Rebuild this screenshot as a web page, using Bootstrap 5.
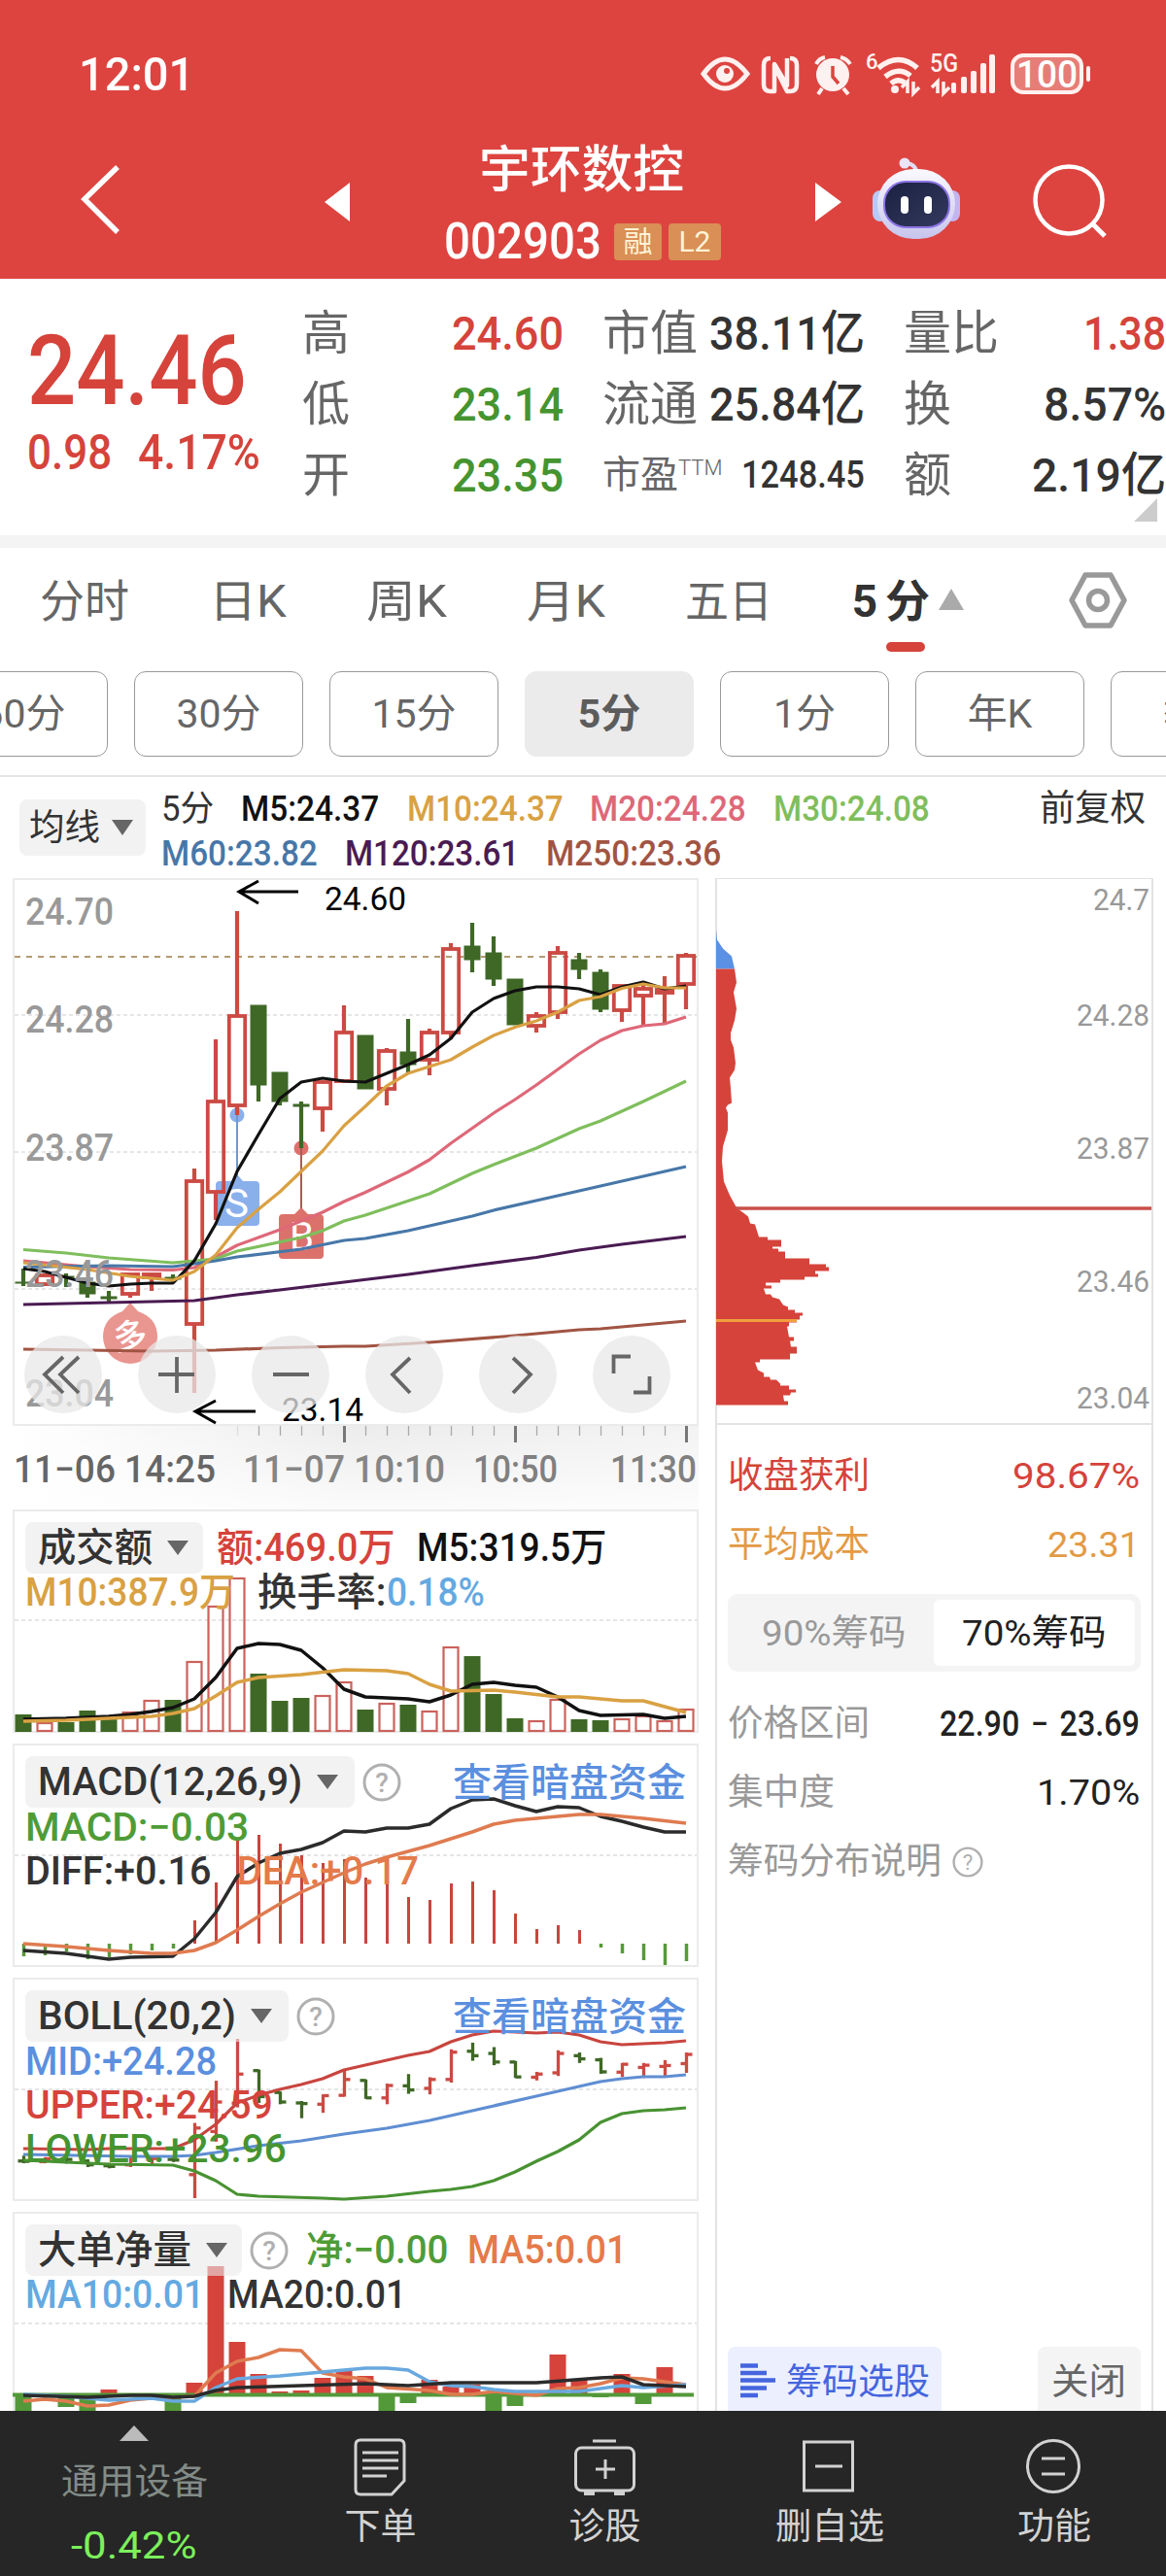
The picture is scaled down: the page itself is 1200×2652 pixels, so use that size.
<!DOCTYPE html>
<html lang="zh-CN">
<head>
<meta charset="utf-8">
<meta name="viewport" content="width=device-width, initial-scale=1">
<title>宇环数控 002903</title>
<link rel="stylesheet" href="https://cdn.jsdelivr.net/npm/bootstrap@5.3.0/dist/css/bootstrap.min.css">
<style>
  :root{--up:#d5433b;--down:#45942f;--ink:#333;--dim:#666;--line:#ebebeb;}
  body{width:1200px;height:2652px;overflow:hidden;background:#fff;color:var(--ink);font-family:Roboto,"Noto Sans CJK SC",sans-serif;font-size:37px;}
  svg{display:block;overflow:visible}
  svg text{font-family:Roboto,"Noto Sans CJK SC",sans-serif}
  [data-w]{display:inline-block;white-space:nowrap;transform-origin:0 50%}
  .up{color:var(--up)} .down{color:var(--down)} .dim{color:var(--dim)}
  .m{font-weight:500}
  /* header */
  .topbar{height:287px;background:#dd4440;color:#fff}
  .statusbar{height:130px;padding:24px 0 0 81px}
  .clock{font-size:49px;line-height:106px}
  .titlebar{height:156px}
  .stock-title{width:300px;margin-left:90px}
  .stock-name{font-size:52px;line-height:58px;font-weight:500;margin-top:17px}
  .stock-code{font-size:51px;line-height:42px;height:42px;margin-top:23px;font-weight:500}
  .tag{height:38px;line-height:38px;background:#d98f55;border-radius:4px;font-size:30px;color:#fff3d6;text-align:center;font-weight:400}
  /* quote */
  .quote{height:264px}
  .price{font-size:101px;line-height:100px}
  .chg{font-size:50px;line-height:68px}
  .q-row{height:73px;line-height:73px;font-size:49px}
  .q-small{font-size:39px}
  .gap-bar{height:13px;background:#f4f4f4}
  /* tabs */
  .periods{height:127px;line-height:111px;font-size:46px;color:#666;gap:82px;padding-left:41px;padding-right:40px}
  .periods .on{color:#333;font-weight:700}
  .periods .on::after{content:"";position:absolute;left:35px;top:97px;width:40px;height:10px;border-radius:5px;background:var(--up)}
  .subs{height:107px;gap:27px;padding-left:0;overflow:hidden}
  .subs .btn{flex:0 0 174px;height:88px;border:1.5px solid #999;border-radius:12px;padding:0;font-size:41px;line-height:84px;color:#666}
  .subs .btn:first-child{margin-left:-63px}
  .subs .btn.on{background:#ebebeb;border-color:#ebebeb;font-weight:700;color:#5c5c5c}
  .ma-head{height:106px;border-top:2px solid #e5e5e5}
  .chip{background:rgba(233,233,233,.6);border-radius:8px;color:#333}
  .chip-ma{width:130px;height:58px;line-height:57px;margin:23px 0 0 20px;padding-left:10px;gap:12px}
  .ma-row{height:46px;line-height:48px;font-size:36px;gap:28px;font-weight:500}
  /* charts */
  .body-area{height:1578px;overflow:hidden}
  .left-col{width:706px;margin-left:13px}
  .panel{border:2px solid var(--line);height:230px;margin-bottom:11px;font-size:40px}
  .panel > svg{position:absolute;left:-2px;top:-2px}
  .panel .chip{height:53px;line-height:53px;padding-left:13px;gap:15px}
  .p-row{position:relative;padding-left:11px;padding-top:11px}
  .v-row{position:relative;height:45px;line-height:45px;padding-left:11px}
  .right-col{width:451px;margin-left:17px;border:2px solid #e3e3e3;border-top-width:1.5px;border-bottom:0}
  .chips-canvas{height:562px;border-bottom:2px solid #e3e3e3}
  .kv{height:71px;line-height:72px;padding:0 12px 0 11px}
  .seg{height:80px;margin:15px 11px 18px 11px;background:#f4f4f4;border-radius:10px;padding:6px;line-height:69px;color:#999}
  .seg .on{background:#fff;border-radius:6px;color:#222;width:207px}
  .seg div{flex:1 1 0;text-align:center}
  .foot-btn{height:80px;border-radius:8px;line-height:74px}
  /* bottom bar */
  .tabbar{height:170px;background:#262626;color:#d2d2d2}
  .tabbar .cell{width:231px;line-height:48px}
  .tabbar .cell svg{margin:22px auto 10px}
</style>
<script src="https://cdn.jsdelivr.net/npm/bootstrap@5.3.0/dist/js/bootstrap.bundle.min.js"></script>
</head>
<body>

<header class="topbar">
  <div class="statusbar d-flex">
    <div class="clock m"><span data-w="119">12:01</span></div>
    <svg width="410" height="60" viewBox="716 46 410 60" class="ms-auto" style="margin-right:74px;margin-top:22px" fill="none" stroke="#fff1ef">
      <path d="M724 76Q746 46 769 76Q746 106 724 76Z" stroke-width="5"/><circle cx="746" cy="76" r="9" fill="#fff1ef" stroke="none"/><circle cx="748" cy="73" r="3" fill="#dd4440" stroke="none"/>
      <path d="M793 60Q786 60 786 67V87Q786 94 793 94H797V66L810 88V60M813 60Q820 60 820 67V87Q820 94 813 94H810L797 68" stroke-width="4.500" stroke-linejoin="round"/>
      <circle cx="857" cy="77" r="17" fill="#fff1ef" stroke="none"/><path d="M857 68V79L863 86" stroke="#dd4440" stroke-width="3.5"/><path d="M840 66Q843 60 849 59M865 59Q871 60 875 66M846 91L842 97M868 91L873 97" stroke-width="4"/>
      <path d="M904 70Q925 53 944 70M911 79Q925 68 937 78M917 86Q924 80 931 85" stroke-width="5.5"/><circle cx="921" cy="92" r="4" fill="#fff1ef" stroke="none"/>
      <path d="M934 96V84L928 90M940 84V96L946 90" stroke-width="3.5"/>
      <g fill="#fff1ef" stroke="none" font-weight="500"><text x="891" y="71" font-size="22" textLength="12">6</text><text x="957" y="74" font-size="25" textLength="29" lengthAdjust="spacingAndGlyphs">5G</text>
      <rect x="979" y="85" width="5" height="11" rx="2"/><rect x="989" y="79" width="6" height="17" rx="2"/><rect x="999" y="73" width="6" height="23" rx="2"/><rect x="1009" y="65" width="6" height="31" rx="2"/><rect x="1018" y="56" width="6" height="40" rx="2"/></g>
      <path d="M965 96V84L959 90M971 84V96L977 90" stroke-width="3.5"/>
      <rect x="1042" y="57" width="71" height="38" rx="11" stroke-width="4" fill="#e77d77"/><path d="M1120 70V82" stroke-width="4" stroke-linecap="round"/>
      <text x="1046" y="90" font-size="39" font-weight="500" fill="#fff" stroke="none" textLength="63" lengthAdjust="spacingAndGlyphs">100</text>
    </svg>
  </div>
  <div class="titlebar d-flex">
    <svg width="360" height="156" viewBox="0 130 360 156" fill="none"><path d="M121 172L87 205L121 239" stroke="#fff" stroke-width="5.5"/><path d="M334 208L360 188V228Z" fill="#fff"/></svg>
    <div class="stock-title text-center">
      <div class="stock-name"><span data-w="211" style="position:relative;left:-1px">宇环数控</span></div>
      <div class="stock-code d-flex align-items-center"><span data-w="162" style="margin-left:7px">002903</span><span class="tag" style="width:49px;margin-left:13px">融</span><span class="tag" style="width:54px;margin-left:7px">L2</span></div>
    </div>
    <svg width="450" height="156" viewBox="750 130 450 156" fill="none">
      <defs><linearGradient id="shell" x1="0" y1="0" x2="0" y2="1"><stop offset="0" stop-color="#fbf9ff"/><stop offset="1" stop-color="#c6c4ec"/></linearGradient>
      <linearGradient id="visor" x1="0" y1="0" x2="1" y2="1"><stop offset="0" stop-color="#1a2040"/><stop offset="1" stop-color="#343a5e"/></linearGradient></defs>
      <path d="M839 188L866 208L839 228Z" fill="#fff"/>
      <path d="M944 180Q943 169 933 168" stroke="#e4dcf4" stroke-width="4"/><circle cx="931" cy="168" r="5.5" fill="#e9e4f8"/>
      <rect x="898" y="196" width="16" height="32" rx="8" fill="#b9c9f5"/><rect x="972" y="196" width="16" height="32" rx="8" fill="#c3b6f0"/>
      <rect x="903" y="174" width="80" height="72" rx="37" fill="url(#shell)"/>
      <rect x="910" y="187" width="67" height="47" rx="22" fill="url(#visor)" stroke="#8d74e6" stroke-width="2"/>
      <rect x="927" y="202" width="8" height="18" rx="4" fill="#fff"/><rect x="951" y="202" width="8" height="18" rx="4" fill="#fff"/>
      <circle cx="1100" cy="206" r="34.5" stroke="#fff" stroke-width="4.5"/><path d="M1124 230L1137 243" stroke="#fff" stroke-width="5"/>
    </svg>
  </div>
</header>

<section class="quote d-flex position-relative">
  <div style="width:312px;padding:45px 0 0 28px" class="up m">
    <div class="price"><span data-w="226">24.46</span></div>
    <div class="chg d-flex"><span data-w="87">0.98</span><span data-w="126" style="margin-left:27px">4.17%</span></div>
  </div>
  <div style="width:268px;padding-top:20px">
    <div class="q-row d-flex justify-content-between"><span class="dim" style="margin-left:-1px">高</span><span data-w="115" class="up m">24.60</span></div>
    <div class="q-row d-flex justify-content-between"><span class="dim" style="margin-left:-1px">低</span><span data-w="115" class="down m">23.14</span></div>
    <div class="q-row d-flex justify-content-between"><span class="dim" style="margin-left:-1px">开</span><span data-w="115" class="down m">23.35</span></div>
  </div>
  <div style="width:270px;margin-left:40px;padding-top:20px">
    <div class="q-row d-flex justify-content-between"><span class="dim">市值</span><span data-w="160" class="m">38.11亿</span></div>
    <div class="q-row d-flex justify-content-between"><span class="dim">流通</span><span data-w="160" class="m">25.84亿</span></div>
    <div class="q-row q-small d-flex justify-content-between"><span class="dim">市盈<span style="font-size:22px;font-weight:300;position:relative;top:-13px">TTM</span></span><span data-w="127" class="m">1248.45</span></div>
  </div>
  <div style="width:270px;margin-left:40px;padding-top:20px">
    <div class="q-row d-flex justify-content-between"><span class="dim">量比</span><span data-w="85" class="up m">1.38</span></div>
    <div class="q-row d-flex justify-content-between"><span class="dim">换</span><span data-w="126" class="m">8.57%</span></div>
    <div class="q-row d-flex justify-content-between"><span class="dim">额</span><span data-w="138" class="m">2.19亿</span></div>
  </div>
  <svg width="24" height="24" class="position-absolute" style="right:9px;top:226px"><path d="M24 0V24H0Z" fill="#ccc"/></svg>
</section>
<div class="gap-bar"></div>

<nav class="periods d-flex">
  <span data-w="92">分时</span><span data-w="80">日K</span><span data-w="83">周K</span><span data-w="81">月K</span><span data-w="90">五日</span>
  <span class="on position-relative d-flex"><span>5</span><span style="margin-left:8px">分</span><svg width="28" height="24" style="margin:41px 0 0 8px"><path d="M14 1L27 23H1Z" fill="#aaa"/></svg></span>
  <svg width="60" height="58" viewBox="0 0 60 58" class="ms-auto" style="margin-top:25px" fill="none" stroke="#999" stroke-width="5.5" stroke-linejoin="round"><path d="M17 3H43L57 29L43 55H17L3 29Z"/><circle cx="30" cy="29" r="9.5"/></svg>
</nav>
<div class="subs d-flex">
  <button class="btn">60分</button><button class="btn">30分</button><button class="btn">15分</button><button class="btn on">5分</button><button class="btn">1分</button><button class="btn">年K</button><button class="btn">季K</button>
</div>

<section class="ma-head d-flex">
  <div class="chip chip-ma d-flex align-items-center"><span data-w="73">均线</span><svg width="22" height="16"><path d="M0 0H22L11 16Z" fill="#666"/></svg></div>
  <div style="margin-left:16px;padding-top:9px">
    <div class="ma-row d-flex"><span data-w="54" class="fw-normal">5分</span><span data-w="142" style="color:#111">M5:24.37</span><span data-w="161" style="color:#d9a143">M10:24.37</span><span data-w="161" style="color:#de6878">M20:24.28</span><span data-w="161" style="color:#7fbe5c">M30:24.08</span></div>
    <div class="ma-row d-flex"><span data-w="161" style="color:#4777a8">M60:23.82</span><span data-w="179" style="color:#4a1b52">M120:23.61</span><span data-w="180" style="color:#a15443">M250:23.36</span></div>
  </div>
  <span class="ms-auto" data-w="109" style="line-height:66px;position:relative;left:-21px">前复权</span>
</section>

<main class="body-area d-flex">
  <div class="left-col">
    <div class="panel position-relative" style="height:564px;margin-bottom:0">
      <svg id="kline" width="706" height="564" viewBox="13 904 706 564" fill="none"></svg>
    </div>
    <div style="height:86px">
      <svg id="axis" width="706" height="86" viewBox="13 1468 706 86"></svg>
    </div>
    <div class="panel position-relative">
      <svg id="vol" width="706" height="230" viewBox="13 1554 706 230" fill="none"></svg>
      <div class="p-row d-flex m">
        <div class="chip d-flex align-items-center" style="width:183px"><span data-w="118">成交额</span><svg width="22" height="15"><path d="M0 0H22L11 15Z" fill="#666"/></svg></div>
        <span data-w="184" class="up" style="line-height:54px;margin-left:14px">额:469.0万</span><span data-w="195" style="line-height:54px;margin-left:22px;color:#111">M5:319.5万</span>
      </div>
      <div class="v-row d-flex m" style="margin-top:-4px"><span data-w="216" style="color:#d9a143">M10:387.9万</span><span data-w="133" style="margin-left:23px">换手率:</span><span data-w="101" style="color:#64a9e2">0.18%</span></div>
    </div>
    <div class="panel position-relative">
      <svg id="macd" width="706" height="230" viewBox="13 1795 706 230" fill="none"></svg>
      <div class="p-row d-flex m">
        <div class="chip d-flex align-items-center" style="width:339px"><span data-w="272">MACD(12,26,9)</span><svg width="22" height="15"><path d="M0 0H22L11 15Z" fill="#666"/></svg></div>
        <svg class="help" width="40" height="40" style="margin:7px 0 0 8px"></svg>
        <span data-w="240" class="ms-auto" style="line-height:55px;color:#5b8fdf;position:relative;left:-11px">查看暗盘资金</span>
      </div>
      <div class="v-row d-flex m" style="margin-top:-4px"><span data-w="230" style="color:#4f9c37">MACD:−0.03</span></div>
      <div class="v-row d-flex m"><span data-w="192">DIFF:+0.16</span><span data-w="187" style="color:#e57a4a;margin-left:26px">DEA:+0.17</span></div>
    </div>
    <div class="panel position-relative">
      <svg id="boll" width="706" height="230" viewBox="13 2036 706 230" fill="none"></svg>
      <div class="p-row d-flex m">
        <div class="chip d-flex align-items-center" style="width:271px"><span data-w="204">BOLL(20,2)</span><svg width="22" height="15"><path d="M0 0H22L11 15Z" fill="#666"/></svg></div>
        <svg class="help" width="40" height="40" style="margin:7px 0 0 8px"></svg>
        <span data-w="240" class="ms-auto" style="line-height:55px;color:#5b8fdf;position:relative;left:-11px">查看暗盘资金</span>
      </div>
      <div class="v-row d-flex m" style="margin-top:-4px;color:#5b8fdf"><span data-w="197">MID:+24.28</span></div>
      <div class="v-row d-flex m up"><span data-w="255">UPPER:+24.59</span></div>
      <div class="v-row d-flex m down"><span data-w="269">LOWER:+23.96</span></div>
    </div>
    <div class="panel position-relative">
      <svg id="big" width="706" height="230" viewBox="13 2277 706 230" fill="none"></svg>
      <div class="p-row d-flex m">
        <div class="chip d-flex align-items-center" style="width:223px"><span data-w="158">大单净量</span><svg width="22" height="15"><path d="M0 0H22L11 15Z" fill="#666"/></svg></div>
        <svg class="help" width="40" height="40" style="margin:7px 0 0 8px"></svg>
        <span data-w="146" style="line-height:54px;color:#4f9c37;margin-left:18px">净:−0.00</span><span data-w="164" style="line-height:54px;margin-left:20px;color:#e57a4a">MA5:0.01</span>
      </div>
      <div class="v-row d-flex m" style="margin-top:-4px"><span data-w="184" style="color:#64a9e2">MA10:0.01</span><span data-w="184" style="margin-left:24px">MA20:0.01</span></div>
    </div>
  </div>

  <aside class="right-col d-flex flex-column">
    <div class="chips-canvas"><svg id="chips" width="447" height="560" viewBox="738 905.5 447 560" fill="none"></svg></div>
    <div class="kv d-flex justify-content-between up" style="margin-top:17px"><span data-w="146">收盘获利</span><span data-w="131">98.67%</span></div>
    <div class="kv d-flex justify-content-between" style="color:#e39a45"><span data-w="146">平均成本</span><span data-w="95">23.31</span></div>
    <div class="seg d-flex"><div><span data-w="149">90%筹码</span></div><div class="on flex-grow-0" style="flex-basis:207px"><span data-w="149">70%筹码</span></div></div>
    <div class="kv d-flex justify-content-between"><span data-w="146" style="color:#999">价格区间</span><span data-w="206" class="m" style="color:#222;font-size:36px;word-spacing:4px">22.90 − 23.69</span></div>
    <div class="kv d-flex justify-content-between"><span data-w="110" style="color:#999">集中度</span><span data-w="106" style="color:#222">1.70%</span></div>
    <div class="kv d-flex align-items-center" style="color:#999"><span data-w="220">筹码分布说明</span><svg class="help" width="32" height="32" viewBox="0 0 40 40" style="margin-left:11px"></svg></div>
    <div class="d-flex justify-content-between mt-auto" style="padding:0 11px;margin-bottom:-14px">
      <div class="foot-btn d-flex" style="width:220px;background:#ebeffe;color:#4565de;padding-left:13px"><svg width="36" height="36" style="margin:17px 11px 0 0"><path d="M0 2.5H18M0 10H27M0 17.5H36M0 25.500H27M0 33H18" stroke="#4565de" stroke-width="4.500"/></svg><span data-w="148">筹码选股</span></div>
      <div class="foot-btn text-center dim" style="width:106px;background:#f4f4f4"><span data-w="77" style="position:relative;left:-1px">关闭</span></div>
    </div>
  </aside>
</main>

<footer class="tabbar d-flex text-center">
  <div style="width:276px"><svg width="30" height="16" style="margin:15px auto 0"><path d="M15 0L30 16H0Z" fill="#bbb"/></svg>
    <div style="line-height:52px;margin-top:17px;color:#828b87"><span data-w="151">通用设备</span></div><div style="line-height:52px;margin-top:13px;font-size:39px;color:#7cf05c"><span data-w="129">-0.42%</span></div></div>
  <div class="cell"><svg width="64" height="64" viewBox="1 0 64 64" fill="none" stroke="#d2d2d2" stroke-width="3"><path d="M12 8H52Q57 8 57 13V50L44 64H12Q7 64 7 59V13Q7 8 12 8Z"/><path d="M14 21H51M14 29H51M14 37H51M14 45H39"/></svg><span data-w="74">下单</span></div>
  <div class="cell"><svg width="64" height="64" viewBox="1 0 64 64" fill="none" stroke="#d2d2d2" stroke-width="3"><path d="M20 9H44M23 38H43M33 28V48"/><rect x="2.500" y="16" width="60" height="44" rx="6"/><path d="M11 63H22M42 63H53" stroke-width="4"/></svg><span data-w="74">诊股</span></div>
  <div class="cell"><svg width="64" height="64" viewBox="1 0 64 64" fill="none" stroke="#d2d2d2" stroke-width="3"><rect x="6.500" y="10" width="50" height="50"/><path d="M18 35H46"/></svg><span data-w="112">删自选</span></div>
  <div class="cell"><svg width="64" height="64" viewBox="1 0 64 64" fill="none" stroke="#d2d2d2" stroke-width="3"><circle cx="32" cy="35" r="26.500"/><path d="M20 27H44M20 43H44"/></svg><span data-w="76">功能</span></div>
</footer>

<script>
// Condense a label to its design width while keeping its height
function fitLabels(){document.querySelectorAll('[data-w]').forEach(function(e){
  var w=+e.dataset.w,n=e.offsetWidth;e.style.transform='scaleX('+(w/n)+')';e.style.marginRight=(w-n)+'px';});}
fitLabels();
document.querySelectorAll('svg.help').forEach(function(s){
  s.innerHTML='<circle cx="20" cy="20" r="18" fill="none" stroke="#b0b0b0" stroke-width="3"/><text x="20" y="30" text-anchor="middle" font-size="28" fill="#b0b0b0">?</text>';});

var RED='#cb4a43',GRN='#3f6826',X=function(i){return 24+22*i;};
function line(p,c,w){return '<polyline points="'+p+'" stroke="'+c+'" stroke-width="'+(w||3.2)+'" stroke-linejoin="round"/>';}
function rect(x,y,w,h,f,s,sw){return '<rect x="'+x+'" y="'+y+'" width="'+w+'" height="'+h+'" fill="'+f+'"'+(s?' stroke="'+s+'" stroke-width="'+sw+'"':'')+'/>';}
function seg(x1,y1,x2,y2,c,w,d){return '<path d="M'+x1+' '+y1+'L'+x2+' '+y2+'" stroke="'+c+'" stroke-width="'+w+'"'+(d?' stroke-dasharray="'+d+'"':'')+'/>';}
function txt(t,x,y,fs,len,c,wt){return '<text x="'+x+'" y="'+y+'" font-size="'+fs+'" fill="'+c+'" font-weight="'+(wt||400)+'" textLength="'+len+'" lengthAdjust="spacingAndGlyphs">'+t+'</text>';}

// [rising?, body top, body bottom, wick top, wick bottom]
var K=[[0,1320,1321,1306,1324],[1,1313,1322,1311,1324],[0,1314,1315,1311,1325],[0,1320,1332,1318,1336],[0,1335,1337,1329,1340],[1,1312,1332,1311,1336],[1,1312,1315,1311,1329],[0,1315,1317,1312,1320],
[1,1216,1363,1203,1434],[1,1134,1227,1070,1256],[1,1046,1138,938,1148],[0,1035,1117,1035,1134],[0,1104,1134,1104,1138],[0,1137,1139,1134,1182],[1,1114,1141,1113,1165],[1,1063,1113,1035,1114],
[0,1066,1121,1066,1121],[1,1082,1121,1079,1138],[0,1083,1096,1049,1105],[1,1063,1091,1059,1107],[1,977,1063,971,1070],[0,974,988,950,1001],[0,981,1008,964,1015],[0,1008,1055,1008,1055],
[1,1046,1056,1042,1063],[1,981,1042,974,1049],[0,988,998,981,1008],[0,1001,1039,998,1042],[1,1015,1040,1014,1052],[1,1018,1025,1014,1055],[1,1019,1022,1005,1053],[1,984,1013,981,1039]];

function kline(){
  var s='';
  [1045,1186,1327].forEach(function(y){s+=seg(15,y,717,y,'#e6e6e6',1.8,'4 3');});
  s+=seg(15,985,717,985,'#b49a72',1.8,'6 6');
  // trade markers
  s+='<g fill="#8ab0ec"><circle cx="244" cy="1148" r="7.500"/><path d="M226 1216H238L244 1209L250 1216H263Q267 1216 267 1220V1258Q267 1262 263 1262H226Q222 1262 222 1258V1220Q222 1216 226 1216Z"/></g>'+seg(244,1148,244,1212,'#6f98cf',2);
  s+='<g fill="#dc716c"><circle cx="310" cy="1182" r="7.500"/><path d="M291 1250H303L310 1243L317 1250H329Q333 1250 333 1254V1292Q333 1296 329 1296H291Q287 1296 287 1292V1254Q287 1250 291 1250Z"/></g>'+seg(310,1182,310,1244,'#ab5b54',2);
  s+='<path d="M134 1341L142 1350Q162 1357 162 1376A28 28 0 0 1 106 1376Q106 1357 126 1350Z" fill="#e99590"/>';
  s+='<text x="134" y="1388" font-size="35" font-weight="500" fill="#fff" text-anchor="middle" transform="rotate(-8 134 1376)">多</text>';
  K.forEach(function(k,i){
    var x=X(i),c=k[0]?RED:GRN;
    if(k[0]){s+=seg(x,k[3],x,k[1],c,4.200)+seg(x,k[2],x,k[4],c,4.200)+rect(x-8.200,k[1],16.400,k[2]-k[1],'none',c,3.800);}
    else{s+=seg(x,k[3],x,k[4],c,4.200)+rect(x-8.500,k[1]-.5,17,k[2]-k[1]+1,c);}
  });
  s+=txt('S',231,1253,41,25,'#fff')+txt('B',298,1287,40,25,'#fff');
  s+=line('24,1389 156,1391 222,1390 288,1387.500 354,1386 376,1386 442,1382 530,1375 596,1369 618,1368 706,1360','#a15443');
  s+=line('24,1343 112,1341 200,1339 244,1333 288,1328 354,1320 420,1312 486,1303 552,1294.500 596,1287 640,1281 706,1273','#4a1b52');
  s+=line('24,1298 90,1304 134,1307 178,1307.500 200,1305 222,1294 244,1282 266,1274 288,1266 310,1257 332,1248 354,1237 376,1227.500 398,1217 420,1206.500 442,1194 464,1177 486,1161.500 508,1146 530,1132 552,1117 574,1101 596,1085 618,1071 640,1061 662,1056 684,1054 706,1047','#de6878');
  s+=line('24,1286.500 68,1290 112,1295 178,1300 222,1296 244,1288 310,1274 332,1267 354,1257 376,1251 442,1229 486,1208 508,1199 552,1182 596,1162 618,1154 662,1134 706,1113','#7fbe5c');
  s+=line('24,1304.500 112,1303 178,1304 222,1298 244,1294 310,1286 354,1277 376,1275 420,1267 486,1252 508,1246 574,1231 618,1221 706,1201','#4777a8');
  s+=line('24,1306 46,1309 68,1315 90,1321 112,1324 134,1322 156,1321 178,1321 200,1298 222,1260 244,1206 266,1168 288,1131 310,1114 332,1110 354,1113 376,1114 398,1105 420,1096 442,1086 464,1069 486,1042 508,1028 530,1020 552,1016 574,1016 596,1018 618,1024 640,1016 662,1011 684,1018 706,1015','#111');
  s+=line('24,1300 90,1307 134,1314 178,1318 200,1309 222,1292 244,1264 266,1245 288,1227 310,1206 332,1185 354,1159 376,1139 398,1118 420,1105 442,1098 464,1091 486,1078 508,1066 530,1057.500 552,1051 574,1042 596,1030 618,1026 640,1017.500 662,1013 684,1017 706,1017','#d9a143');
  [['24.70',952],['24.28',1063],['23.87',1195],['23.46',1325],['23.04',1448]].forEach(function(a){s+=txt(a[0],26,a[1],39,91,'#999',500);});
  s+='<g stroke="#000" stroke-width="3"><path d="M246 918H307M266 907L246 918L266 930M201 1453H263M222 1442L201 1453L222 1465"/></g>';
  s+=txt('24.60',334,937,34,84,'#000')+txt('23.14',290,1463,34,84,'#000');
  [65,182,299,416,533,650].forEach(function(x){s+='<circle cx="'+x+'" cy="1415" r="40" fill="#e8e8e8" fill-opacity=".75"/>';});
  s+='<path d="M65 1397L46 1415L65 1434M81 1397L62 1415L81 1434M163 1415H200M182 1397V1434M281 1415H318M422 1398L404 1415L422 1434M528 1398L546 1415L528 1434M649 1396.500H631.500V1414M652 1433.500H668.500V1417" stroke="#666" stroke-width="3.800"/>';
  document.getElementById('kline').innerHTML=s;
}
function axis(){
  var s='<defs><linearGradient id="ax" x1="0" x2="1"><stop offset="0" stop-color="#eee" stop-opacity="0"/><stop offset=".5" stop-color="#ececec"/><stop offset="1" stop-color="#f3f3f3"/></linearGradient><linearGradient id="ay" x1="0" y1="0" x2="0" y2="1"><stop offset="0" stop-color="#fff" stop-opacity="0"/><stop offset="1" stop-color="#fff" stop-opacity=".8"/></linearGradient></defs>';
  s+=rect(13,1468,706,86,'url(#ax)')+rect(13,1468,706,86,'url(#ay)');
  for(var i=10;i<32;i++){var big=(i===15||i===23||i===31);s+=seg(X(i)+.5,1468,X(i)+.5,big?1485:1478,big?'#777':(i===10?'#ddd':'#aaa'),big?3:1.300);}
  s+=txt('11−06 14:25',14,1526,39,208,'#666',500)+txt('11−07 10:10',250,1526,39,208,'#858585',500)+txt('10:50',487,1526,39,87,'#808080',500)+txt('11:30',628,1526,39,89,'#808080',500);
  document.getElementById('axis').innerHTML=s;
}
function vol(){
  var top=[1765,1774,1773,1761,1770,1763,1751,1750,1711,1654,1625,1723,1751,1748,1746,1732,1760,1754,1755,1762,1696,1705,1744,1769,1772,1750,1770,1771,1770,1767,1772,1760];
  var s=seg(15,1668,717,1668,'#ddd',1.500,'4 3');
  top.forEach(function(t,i){s+=K[i][0]?rect(X(i)-7.500,t,15,1782-t,'none','#cb625c',2.200):rect(X(i)-8.500,t,17,1783-t,GRN);});
  s+=line('24,1770 68,1769 112,1767 134,1765 156,1762 178,1758 200,1749 222,1727 244,1697 266,1692 288,1693 310,1699 332,1717 354,1739 376,1747 420,1749 442,1752 464,1745 486,1734 508,1732 530,1735 552,1737 574,1747 596,1761 618,1766 662,1765 684,1769 706,1767','#111',3.500);
  s+=line('24,1772 68,1771 112,1769 156,1767 178,1764 200,1759 222,1746 244,1732 266,1727 310,1724 354,1719 398,1720 420,1723 442,1734 464,1741 508,1740 530,1742 574,1747 596,1747 640,1751 662,1751 706,1763','#d9a143',3.500);
  document.getElementById('vol').innerHTML=s;
}
function macd(){
  var v=[2014,2013,2009,2017,2015,2012,2008,2006,1977,1938,1892,1889,1898,1910,1918,1914,1933,1940,1953,1956,1939,1937,1946,1970,1986,1982,1987,2005,2011,2018,2023,2019];
  var s=seg(15,1910,717,1910,'#ddd',1.500,'4 3');
  v.forEach(function(y,i){s+=seg(X(i)+.5,2001,X(i)+.5,y,y>2001?'#58993b':'#c8453f',y>2001?3.500:3);});
  s+=line('24,2008 68,2011 112,2017 134,2015 178,2014 200,1996 222,1969 244,1932 266,1918 288,1908 310,1904 332,1897 354,1885 376,1886 398,1882 420,1882 442,1878 464,1862 486,1853 508,1852 530,1859 552,1865 574,1860 596,1861 618,1870 640,1875 662,1881 684,1886 706,1886','#2b2b2b',3.500);
  s+=line('24,2001 68,2004 112,2008 156,2011 178,2011 200,2008 222,2000 244,1987 266,1973 288,1960 310,1948 332,1938 354,1928 376,1919 398,1912 420,1906 442,1900 464,1893 486,1886 508,1878 530,1874 574,1870 596,1868 618,1868 640,1870 662,1872 706,1877','#df7b50',3.500);
  document.getElementById('macd').innerHTML=s;
}
function boll(){
  var s=seg(15,2151,717,2151,'#ddd',1.500,'4 3'),f=function(y){return 2100+(y-938)*.3266;};
  K.forEach(function(k,i){var x=X(i)+.5,c=k[0]?RED:GRN;
    s+=seg(x,f(k[3])-1,x,f(k[4])+1,c,3.300)+seg(x-6,f(k[0]?k[2]:k[1]),x,f(k[0]?k[2]:k[1]),c,3.300)+seg(x,f(k[0]?k[1]:k[2]),x+6,f(k[0]?k[1]:k[2]),c,3.300);});
  s+=line('24,2212 90,2213 112,2212 178,2212 200,2203 222,2187 244,2165 266,2157 288,2151 310,2146 332,2140 354,2131 398,2121 420,2116 442,2112 464,2102 486,2095 508,2091 552,2093 574,2092 596,2095 618,2102 640,2105 662,2104 684,2103 706,2101','#c8453f');
  s+=line('24,2218 134,2220 178,2220 200,2219 222,2216 266,2209 310,2204 354,2197 398,2191 442,2183 486,2173 552,2158 596,2148 618,2143 640,2140 662,2138 684,2138 706,2136','#5f8ed2');
  s+=line('24,2224 68,2226 112,2228 178,2229 200,2235 222,2245 244,2259 266,2261 332,2263 354,2264 398,2261 442,2256 464,2254 486,2251 508,2245 530,2236 552,2225 574,2215 596,2203 618,2185 640,2176 662,2173 684,2172 706,2170','#489232');
  document.getElementById('boll').innerHTML=s;
}
function big(){
  var up={4:2460,8:2453,9:2333,10:2411,11:2444,12:2462,13:2461,14:2448,15:2439,16:2446,19:2450,20:2457,21:2455,25:2424,26:2450,28:2444,30:2437},dn={0:2483,2:2478,3:2483,7:2483,17:2483,18:2474,22:2483,23:2477,27:2468,29:2475},i;
  var s=seg(15,2392,717,2392,'#ddd',1.500,'4 3');
  for(i in up)s+=rect(X(+i)-8.500,up[i],17,2464-up[i],'#d5433b');
  for(i in dn)s+=rect(X(+i)-8.500,2464,17,dn[i]-2464,'#53993a');
  s+=seg(13,2465.500,714,2465.500,'#53993a',4);
  s+=line('24,2472 46,2470 68,2472 90,2477 112,2476 134,2471 156,2469 200,2467 222,2443 244,2431 266,2427 288,2419 310,2420 332,2443 354,2447 376,2449 398,2458 442,2461 464,2465 486,2465 508,2462 530,2464 552,2466 574,2459 596,2458 618,2454 640,2448 662,2449 706,2455','#df7b50',3.500);
  s+=line('24,2465 68,2467 112,2471 156,2469 178,2472 200,2472 222,2458 244,2449 288,2446 332,2442 376,2438 398,2438 420,2440 442,2452 464,2456 486,2457 508,2460 530,2462 596,2462 640,2456 662,2458 706,2455','#68a8de',3.500);
  s+=line('24,2466 90,2468 134,2466 156,2466 178,2468 200,2467 222,2461 244,2458 310,2456 376,2454 420,2456 464,2453 552,2453 618,2448 640,2447 662,2455 706,2457','#2b2b2b',3.500);
  document.getElementById('big').innerHTML=s;
}
function chips(){
  var s='<path d="M737 957L738 968L744 977L753 985L756 998H737Z" fill="#5b91e4"/>';
  s+='<path d="M737 998H756L758 1012L755 1022L758 1039L756 1051L752 1064V1071L755 1079L757 1095L756 1102L751 1110L752 1121L753 1136L749 1138L747 1141L749 1146V1164L744 1181L743 1196L745 1217L751 1231L757 1242L762 1247L765 1249L770 1253L772 1260L777 1261L781 1274H790V1277H804V1284H795V1286H801V1289H808V1296H833V1302H850V1305H853V1309H839V1312H842V1315H828V1318H803V1321H788V1324H794V1327H786L788 1333H793L795 1336L802 1338L806 1344L811 1346V1349H818V1352H826V1355H823V1359H820V1362H812V1366H810L812 1377H817V1381H813L814 1387H820V1394H813V1400H782V1403H777L780 1411L786 1414V1418H792L793 1421H799L803 1425V1427H812V1431H819V1434H814L813 1437H806L807 1443H811V1447H737Z" fill="#d5433b"/>';
  s+=seg(757,1244.500,1185,1244.500,'#c94f48',3.300)+seg(737,1360,820,1360,'#f0a03c',3);
  [['24.7',1125,937,58],['24.28',1108,1056,75],['23.87',1108,1193,75],['23.46',1108,1330,75],['23.04',1108,1450,75]].forEach(function(a){s+=txt(a[0],a[1],a[2],31.500,a[3],'#999');});
  document.getElementById('chips').innerHTML=s;
}
kline();axis();vol();macd();boll();big();chips();
</script>
</body>
</html>
